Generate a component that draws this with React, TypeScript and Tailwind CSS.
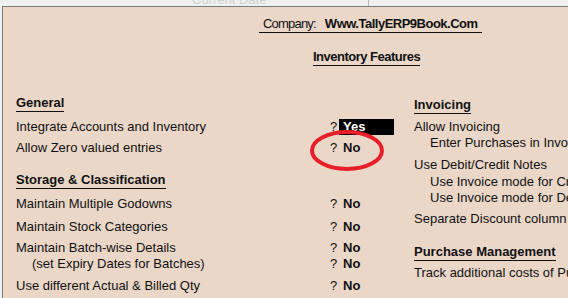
import React from "react";

type Row = { label: string; value?: string; indent?: boolean; mt: string; selected?: boolean };

const leftRows: (Row | { heading: string; mt: string })[] = [
  { heading: "General", mt: "mt-0" },
  { label: "Integrate Accounts and Inventory", value: "Yes", selected: true, mt: "mt-[7px]" },
  { label: "Allow Zero valued entries", value: "No", mt: "mt-[5px]" },
  { heading: "Storage & Classification", mt: "mt-[16px]" },
  { label: "Maintain Multiple Godowns", value: "No", mt: "mt-[7px]" },
  { label: "Maintain Stock Categories", value: "No", mt: "mt-[7px]" },
  { label: "Maintain Batch-wise Details", value: "No", mt: "mt-[5px]" },
  { label: "(set Expiry Dates for Batches)", value: "No", indent: true, mt: "mt-0" },
  { label: "Use different Actual & Billed Qty", value: "No", mt: "mt-[6px]" },
];

function Heading({ text, mt }: { text: string; mt: string }) {
  return (
    <div className={`${mt} flex`}>
      <span className="font-bold leading-4 border-b border-[#111]">{text}</span>
    </div>
  );
}

export default function App() {
  return (
    <div className="relative w-[568px] h-[298px] overflow-hidden bg-[#eef1f0] flex flex-col font-['Liberation_Sans',Arial,sans-serif] text-[13px] text-[#111]">
      {/* top strip */}
      <div className="h-[6px] shrink-0 flex overflow-hidden">
        <div className="w-[369px] shrink-0 border-r border-[#b4b8b8] overflow-hidden">
          <div className="mt-[-8px] pl-[192px] leading-4 text-[#cfd3d3] whitespace-nowrap">Current Date</div>
        </div>
      </div>
      {/* main panel */}
      <div className="flex-1 ml-[2px] border-l border-t border-[#7a7a7a] bg-[#ead7c8] pt-[9px] flex flex-col">
        <div className="flex">
          <div className="ml-[256px] px-[4px] border-b border-[#111] leading-4 whitespace-pre flex">
            <span className="tracking-[-0.8px]">Company:</span>
            <span className="w-[9px]"></span>
            <span className="font-bold tracking-[-0.5px]">Www.TallyERP9Book.Com</span>
          </div>
        </div>
        <div className="flex mt-[16px]">
          <span className="ml-[310px] font-bold tracking-[-0.5px] leading-4 border-b border-[#111]">Inventory Features</span>
        </div>
        <div className="flex mt-[29px] pl-[13px]">
          {/* left column */}
          <div className="w-[398px] shrink-0 flex flex-col">
            {leftRows.map((r, i) =>
              "heading" in r ? (
                <Heading key={i} text={r.heading} mt={r.mt} />
              ) : (
                <div key={i} className={`${r.mt} flex h-4 leading-4 whitespace-nowrap`}>
                  <span className={`w-[314px] shrink-0 ${r.indent ? "pl-[16px]" : ""}`}>{r.label}</span>
                  <span className="w-[9px] shrink-0">?</span>
                  <span
                    className={`w-[55px] shrink-0 px-[4px] font-bold ${r.selected ? "bg-black text-white" : ""}`}
                  >
                    {r.value}
                  </span>
                </div>
              )
            )}
          </div>
          {/* right column */}
          <div className="flex flex-col whitespace-nowrap">
            <Heading text="Invoicing" mt="mt-[2px]" />
            <div className="mt-[5px] h-4 leading-4">Allow Invoicing</div>
            <div className="h-4 leading-4 pl-[16px]">Enter Purchases in Invoice Format</div>
            <div className="mt-[6px] h-4 leading-4">Use Debit/Credit Notes</div>
            <div className="mt-[1px] h-4 leading-4 pl-[16px]">Use Invoice mode for Credit Notes</div>
            <div className="h-4 leading-4 pl-[16px]">Use Invoice mode for Debit Notes</div>
            <div className="mt-[5px] h-4 leading-4">Separate Discount column on Invoices</div>
            <Heading text="Purchase Management" mt="mt-[17px]" />
            <div className="mt-[4px] h-4 leading-4">Track additional costs of Purchases</div>
          </div>
        </div>
      </div>
      {/* red annotation ellipse */}
      <svg className="absolute left-[309px] top-[129px]" width="76" height="43" viewBox="0 0 76 43">
        <ellipse cx="38" cy="21.5" rx="35" ry="18.5" fill="none" stroke="#e81e28" strokeWidth="4" />
      </svg>
    </div>
  );
}
